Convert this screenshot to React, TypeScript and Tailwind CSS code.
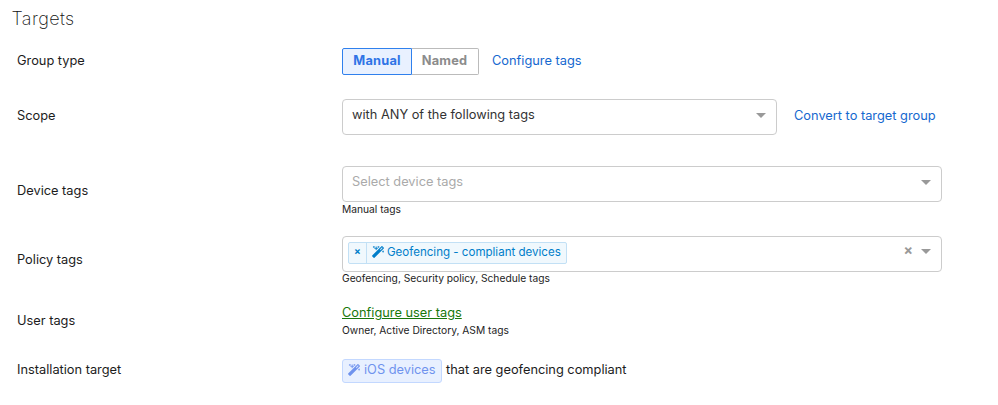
import type { ReactNode } from "react";

function Row({ label, className, labelClass, children }: { label: string; className: string; labelClass: string; children: ReactNode }) {
  return (
    <div className={`flex items-start pl-[17px] ${className}`}>
      <div className={`w-[325px] shrink-0 leading-5 ${labelClass}`}>{label}</div>
      <div>{children}</div>
    </div>
  );
}

function Caret() {
  return (
    <svg width="10" height="5" viewBox="0 0 10 5" className="shrink-0 fill-[#999]">
      <path d="M0 0h10L5 5z" />
    </svg>
  );
}

function Wand({ className }: { className: string }) {
  return (
    <svg viewBox="0 0 1664 1664" className={`shrink-0 fill-current stroke-current ${className}`} strokeWidth="50">
      <path d="M1190 581l293-293-107-107-293 293zm447-293q0 27-18 45l-1286 1286q-18 18-45 18t-45-18l-198-198q-18-18-18-45t18-45l1286-1286q18-18 45-18t45 18l198 198q18 18 18 45zm-1351-190l98 30-98 30-30 98-30-98-98-30 98-30 30-98zm350 162l196 60-196 60-60 196-60-196-196-60 196-60 60-196zm930 478l98 30-98 30-30 98-30-98-98-30 98-30 30-98zm-640-640l98 30-98 30-30 98-30-98-98-30 98-30 30-98z" />
    </svg>
  );
}

export default function App() {
  return (
    <div className="h-[405px] w-[998px] overflow-hidden bg-white font-['Inter',sans-serif] text-[12.8px] text-[#1c1c1c]">
      <h1 className="h-12 pt-[7px] pl-[11.5px] text-[18px] leading-6 font-extralight tracking-[0.4px] text-[#111]">Targets</h1>

      <Row label="Group type" className="h-[51px]" labelClass="mt-[3px]">
        <div className="flex items-center">
          <div className="flex h-[27px] font-bold tracking-[0.2px]">
            <button className="flex w-[70px] items-center justify-center rounded-l-[2px] border border-[#2f80ed] bg-[#e9f1ff] pb-px text-[#2f74e6]">Manual</button>
            <button className="flex w-[67px] items-center justify-center rounded-r-[2px] border border-l-0 border-[#bbb] bg-white pr-px pb-px text-[#8c8c8c]">Named</button>
          </div>
          <a className="-mt-[2px] ml-[13px] leading-5 text-[#1568cf]">Configure tags</a>
        </div>
      </Row>

      <Row label="Scope" className="h-[67px]" labelClass="mt-[7px]">
        <div className="flex">
          <div className="flex h-9 w-[435px] items-center justify-between rounded-[4px] border border-[#ccc] pr-[10px] pb-1 pl-[9px]">
            <span className="leading-5 text-[#333]">with ANY of the following tags</span>
            <Caret />
          </div>
          <a className="mt-[7px] ml-[17px] leading-5 text-[#1568cf]">Convert to target group</a>
        </div>
      </Row>

      <Row label="Device tags" className="h-[70px]" labelClass="mt-[15px]">
        <div className="flex h-9 w-[600px] items-center justify-between rounded-[4px] border border-[#ccc] pr-[10px] pb-1 pl-[9px]">
          <span className="leading-5 text-[#aaa]">Select device tags</span>
          <Caret />
        </div>
        <div className="text-[10.24px] leading-[14px]">Manual tags</div>
      </Row>

      <Row label="Policy tags" className="h-[67px]" labelClass="mt-[14px]">
        <div className="flex h-9 w-[600px] items-start rounded-[4px] border border-[#ccc] pt-[5px] pr-[10px] pl-[5px]">
          <div className="flex h-[22px] w-[219px] items-center rounded-[2px] border border-[#c2e0f5] bg-[#f0f8fd] text-[#007eca]">
            <span className="flex h-full w-[18px] items-center justify-center border-r border-[#c2e0f5] pb-[4px] text-[10px] font-bold">×</span>
            <Wand className="mb-[2px] ml-[5px] size-3" />
            <span className="ml-[3px] pb-px text-[11.55px] whitespace-nowrap">Geofencing - compliant devices</span>
          </div>
          <span className="ml-auto text-[14px] leading-[15px] font-bold text-[#999]">×</span>
          <span className="mt-[7px] ml-2"><Caret /></span>
        </div>
        <div className="text-[10.24px] leading-[12px]">Geofencing, Security policy, Schedule tags</div>
      </Row>

      <Row label="User tags" className="h-14" labelClass="mt-2">
        <a className="block leading-5 text-[#18780b] underline">Configure user tags</a>
        <div className="text-[10.24px] leading-[15px]">Owner, Active Directory, ASM tags</div>
      </Row>

      <Row label="Installation target" className="h-6" labelClass="mt-px">
        <div className="flex">
          <span className="flex h-6 w-[100px] items-center rounded-[3px] border border-[#c3d8ff] bg-[#e8f0ff] pl-[5px] text-[#6f93ee]">
            <Wand className="mb-[3px] size-3" />
            <span className="ml-[4px] pb-[2px] whitespace-nowrap">iOS devices</span>
          </span>
          <span className="mt-px ml-1 leading-5">that are geofencing compliant</span>
        </div>
      </Row>
    </div>
  );
}
